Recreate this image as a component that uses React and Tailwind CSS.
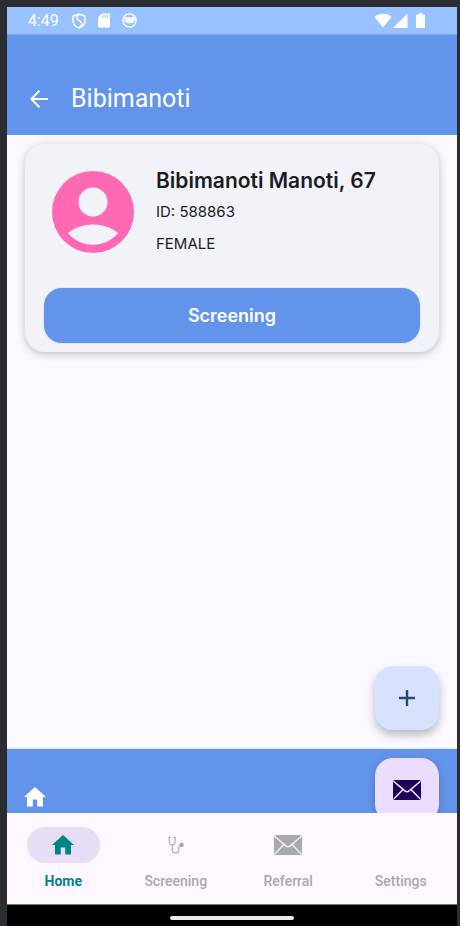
import React from "react";

function HomeIcon({ className }) {
  return (
    <svg viewBox="0 0 22 20" className={className} fill="currentColor" aria-hidden="true">
      <path d="M11 0 L22 10 H19 V19.5 H13.2 V12.5 H8.8 V19.5 H3 V10 H0 Z" />
    </svg>
  );
}

function MailIcon({ className }) {
  return (
    <svg viewBox="0 0 28 20" className={className} aria-hidden="true">
      <rect width="28" height="20" rx="2" fill="currentColor" />
      <path
        d="M0.5 1.2 L11.6 10.6 Q14 12.8 16.4 10.6 L27.5 1.2 M1 18.8 L10 9.4 M27 18.8 L18 9.4"
        fill="none"
        className="stroke-[#f4e9fd]"
        strokeWidth="1.5"
      />
    </svg>
  );
}

function StethoscopeIcon() {
  return (
    <svg viewBox="0 0 16 18" className="h-[18px] w-4" fill="none" stroke="currentColor" strokeWidth="1.1" aria-hidden="true">
      <path d="M3 1.4 H1.2 V4.5 C1.2 7.2 2.4 8.9 4.2 8.9 C6 8.9 7.2 7.2 7.2 4.5 V1.4 H5.4 M4.2 8.9 V13.4 C4.2 18 10.8 18 10.8 13.4 C10.8 11 11.4 9.4 13 9.4" />
      <circle cx="13.6" cy="9" r="1.6" fill="currentColor" />
    </svg>
  );
}

function StatusBar() {
  return (
    <div className="flex h-7 items-center justify-between border-b border-[#80abf2] bg-[#97c2ff] pr-8 pl-[21px] text-white">
      <div className="flex items-center">
        <span className="w-11 text-base">4:49</span>
        <svg viewBox="0 0 14 16" className="h-4 w-[14px]" fill="none" stroke="currentColor" strokeWidth="1.5" aria-hidden="true">
          <path d="M7 1 L13 3.2 V7.5 C13 11 10.5 13.8 7 15 C3.5 13.8 1 11 1 7.5 V3.2 Z" />
          <path d="M7.5 1.2 C3.6 3 4 5 6.2 6.8 L9 9.2 C10.8 11 9.4 13 7.4 14.6" />
        </svg>
        <svg viewBox="0 0 12 15" className="ml-3 h-[15px] w-3" aria-hidden="true">
          <path d="M4 0.5 H10.8 Q12 0.5 12 1.7 V13.3 Q12 14.5 10.8 14.5 H1.2 Q0 14.5 0 13.3 V4.5 Z" fill="currentColor" />
          <path d="M4.8 2 V5 M7.2 2 V5 M9.6 2 V5" className="stroke-[#97c2ff]" strokeWidth="1" />
        </svg>
        <svg viewBox="0 0 15 15" className="ml-3 size-[15px]" aria-hidden="true">
          <circle cx="7.5" cy="7.5" r="6.6" fill="none" stroke="currentColor" strokeWidth="1.4" />
          <path d="M2.4 6 L3.2 3.4 L5.2 4.6 H9.8 L11.8 3.4 L12.6 6 V7.6 C12 9.8 10 10.2 7.5 10.2 C5 10.2 3 9.8 2.4 7.6 Z" fill="currentColor" />
          <path d="M4.6 6.4 H5.4 M9.6 6.4 H10.4 M7 8.4 H8" className="stroke-[#97c2ff]" strokeWidth="0.8" />
        </svg>
      </div>
      <div className="flex items-center">
        <svg viewBox="0 0 18 15" className="h-[15px] w-[18px]" fill="currentColor" aria-hidden="true">
          <path d="M0.5 4 C5 -0.3 13 -0.3 17.5 4 L9 14.4 Z" />
        </svg>
        <svg viewBox="0 0 15 15" className="ml-px h-[15px] w-[15px]" fill="currentColor" aria-hidden="true">
          <path d="M0 15 L14.5 0.5 V15 Z" />
        </svg>
        <svg viewBox="0 0 9 15" className="ml-2 h-[15px] w-[9px]" fill="currentColor" aria-hidden="true">
          <path d="M3 0 H6 V1.6 H8.2 Q9 1.6 9 2.4 V14.2 Q9 15 8.2 15 H0.8 Q0 15 0 14.2 V2.4 Q0 1.6 0.8 1.6 H3 Z" />
        </svg>
      </div>
    </div>
  );
}

function PatientCard() {
  return (
    <section className="rounded-[20px] bg-[#f2f3f9] px-[19px] pt-[22px] pb-[9px] font-[Inter,sans-serif] text-[#1b1c21] shadow-[0_2px_8px_rgba(0,0,0,0.24)]">
      <div className="flex gap-[22px] pl-2">
        <svg viewBox="0 0 82 82" className="mt-[5px] size-[82px] shrink-0" role="img" aria-label="Patient">
          <circle cx="41" cy="41" r="41" fill="#ff69b4" />
          <circle cx="41" cy="31" r="14.5" fill="#f2f3f9" />
          <path d="M16 62 C30 50.5 52 50.5 66 62 C54 77.5 28 77.5 16 62 Z" fill="#f2f3f9" />
        </svg>
        <div className="min-w-0">
          <h2 className="text-[21px] leading-[30px] font-semibold">Bibimanoti Manoti, 67</h2>
          <p className="text-[15px] leading-8">ID: 588863</p>
          <p className="text-[15px] leading-8">FEMALE</p>
        </div>
      </div>
      <button
        type="button"
        className="mt-7 h-[55px] w-full rounded-[18px] bg-[#6394eb] text-lg font-semibold text-white shadow-[0_0_2px_rgba(0,0,0,0.2)]"
      >
        Screening
      </button>
    </section>
  );
}

const tabs = [
  { label: "Home", icon: <HomeIcon className="h-5 w-[22px]" />, active: true },
  { label: "Screening", icon: <StethoscopeIcon /> },
  { label: "Referral", icon: <MailIcon className="h-5 w-7" /> },
  { label: "Settings", icon: null },
];

function TabBar() {
  return (
    <nav className="grid h-[91px] grid-cols-4 bg-[#fef7ff] pt-[14px]">
      {tabs.map((tab) => (
        <button
          key={tab.label}
          type="button"
          aria-current={tab.active ? "page" : undefined}
          className={
            tab.active
              ? "flex flex-col items-center gap-2 text-sm font-bold text-[#008585]"
              : "flex flex-col items-center gap-2 text-sm font-medium text-[#a9a8aa]"
          }
        >
          <span
            className={
              tab.active
                ? "flex h-9 w-[73px] items-center justify-center rounded-full bg-[#e7def6]"
                : "flex h-9 w-[73px] items-center justify-center"
            }
          >
            {tab.icon}
          </span>
          <span>{tab.label}</span>
        </button>
      ))}
    </nav>
  );
}

export default function App() {
  return (
    <div className="flex min-h-screen flex-col bg-[#2b2d30] pt-[7px] pr-[3px] pl-[7px] font-[Roboto,sans-serif]">
      <StatusBar />
      <header className="flex h-[100px] items-end bg-[#6394eb] pb-5 pl-[23px] text-white">
        <button type="button" aria-label="Back" className="mb-[7px] w-[41px]">
          <svg viewBox="0 0 18 18" className="size-[18px]" fill="none" stroke="currentColor" strokeWidth="2" aria-hidden="true">
            <path d="M18 9 H1.5 M9.5 0.8 L1.3 9 L9.5 17.2" />
          </svg>
        </button>
        <h1 className="text-[25px] leading-8">Bibimanoti</h1>
      </header>
      <main className="flex grow flex-col bg-[#faf9ff] px-[18px] pt-[9px] pb-[18px]">
        <PatientCard />
        <button
          type="button"
          aria-label="Add"
          className="mt-auto flex size-16 items-center justify-center self-end rounded-[18px] bg-[#d7e2ff] text-[#2a4678] shadow-[0_5px_10px_rgba(0,0,0,0.26)]"
        >
          <svg viewBox="0 0 16 16" className="size-4" stroke="currentColor" strokeWidth="2.4" aria-hidden="true">
            <path d="M8 0 V16 M0 8 H16" />
          </svg>
        </button>
      </main>
      <div className="flex h-[65px] items-start justify-between overflow-hidden border-t border-[#dce6fb] bg-[#6394eb] pr-[18px] pl-[17px]">
        <button type="button" aria-label="Home" className="mt-[38px] text-white">
          <HomeIcon className="h-5 w-[22px]" />
        </button>
        <button
          type="button"
          aria-label="Messages"
          className="mt-[9px] flex size-16 shrink-0 items-center justify-center rounded-[18px] bg-[#eaddff] text-[#21005d] shadow-[0_3px_8px_rgba(0,0,0,0.2)]"
        >
          <MailIcon className="h-5 w-7" />
        </button>
      </div>
      <TabBar />
      <div className="flex h-[22px] justify-center border-t border-[#777777] bg-black pt-[11px]">
        <div className="h-1 w-[124px] rounded-full bg-[#e8e8e8]" />
      </div>
    </div>
  );
}
